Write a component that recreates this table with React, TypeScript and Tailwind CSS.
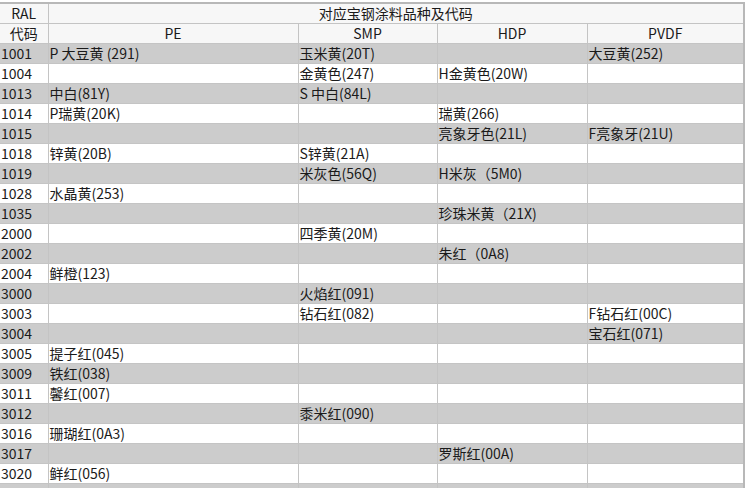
import React from 'react';

type Row = [string, string, string, string, string];

const ROWS: Row[] = [
  ['1001', 'P 大豆黄 (291)', '玉米黄(20T)', '', '大豆黄(252)'],
  ['1004', '', '金黄色(247)', 'H金黄色(20W)', ''],
  ['1013', '中白(81Y)', 'S 中白(84L)', '', ''],
  ['1014', 'P瑞黄(20K)', '', '瑞黄(266)', ''],
  ['1015', '', '', '亮象牙色(21L)', 'F亮象牙(21U)'],
  ['1018', '锌黄(20B)', 'S锌黄(21A)', '', ''],
  ['1019', '', '米灰色(56Q)', 'H米灰（5M0)', ''],
  ['1028', '水晶黄(253)', '', '', ''],
  ['1035', '', '', '珍珠米黄（21X)', ''],
  ['2000', '', '四季黄(20M)', '', ''],
  ['2002', '', '', '朱红（0A8)', ''],
  ['2004', '鲜橙(123)', '', '', ''],
  ['3000', '', '火焰红(091)', '', ''],
  ['3003', '', '钻石红(082)', '', 'F钻石红(00C)'],
  ['3004', '', '', '', '宝石红(071)'],
  ['3005', '提子红(045)', '', '', ''],
  ['3009', '铁红(038)', '', '', ''],
  ['3011', '馨红(007)', '', '', ''],
  ['3012', '', '黍米红(090)', '', ''],
  ['3016', '珊瑚红(0A3)', '', '', ''],
  ['3017', '', '', '罗斯红(00A)', ''],
  ['3020', '鲜红(056)', '', '', ''],
  ['', '', '', '', ''],
];

const cell = 'h-5 border border-[#c4c4c4] px-0 leading-[19px] whitespace-nowrap overflow-hidden';

export default function App() {
  return (
    <div
      className="w-[745px] h-[488px] overflow-hidden bg-white pt-[2px] text-[14px] text-[#1a1a1a]"
      style={{ fontFamily: '"Noto Sans CJK SC", "Noto Sans", sans-serif' }}
    >
      <table className="table-fixed border-collapse w-[744px] border-t-2 border-r-2 border-[#b8b8b8]">
        <colgroup>
          <col className="w-[48px]" />
          <col className="w-[250px]" />
          <col className="w-[139px]" />
          <col className="w-[150px]" />
          <col className="w-[157px]" />
        </colgroup>
        <thead className="bg-[#f7f7f7]">
          <tr>
            <td className={`${cell} text-center border-l-0`}>RAL</td>
            <td colSpan={4} className={`${cell} text-center`}>对应宝钢涂料品种及代码</td>
          </tr>
          <tr>
            <td className={`${cell} text-center border-l-0`}>代码</td>
            <td className={`${cell} text-center`}>PE</td>
            <td className={`${cell} text-center`}>SMP</td>
            <td className={`${cell} text-center`}>HDP</td>
            <td className={`${cell} text-center`}>PVDF</td>
          </tr>
        </thead>
        <tbody>
          {ROWS.map((r, i) => (
            <tr key={i} className={i % 2 === 0 ? 'bg-[#cccccc]' : 'bg-white'}>
              {r.map((c, j) => (
                <td key={j} className={`${cell} text-left pl-px ${j === 0 ? 'border-l-0' : ''}`}>
                  {c}
                </td>
              ))}
            </tr>
          ))}
        </tbody>
      </table>
    </div>
  );
}
